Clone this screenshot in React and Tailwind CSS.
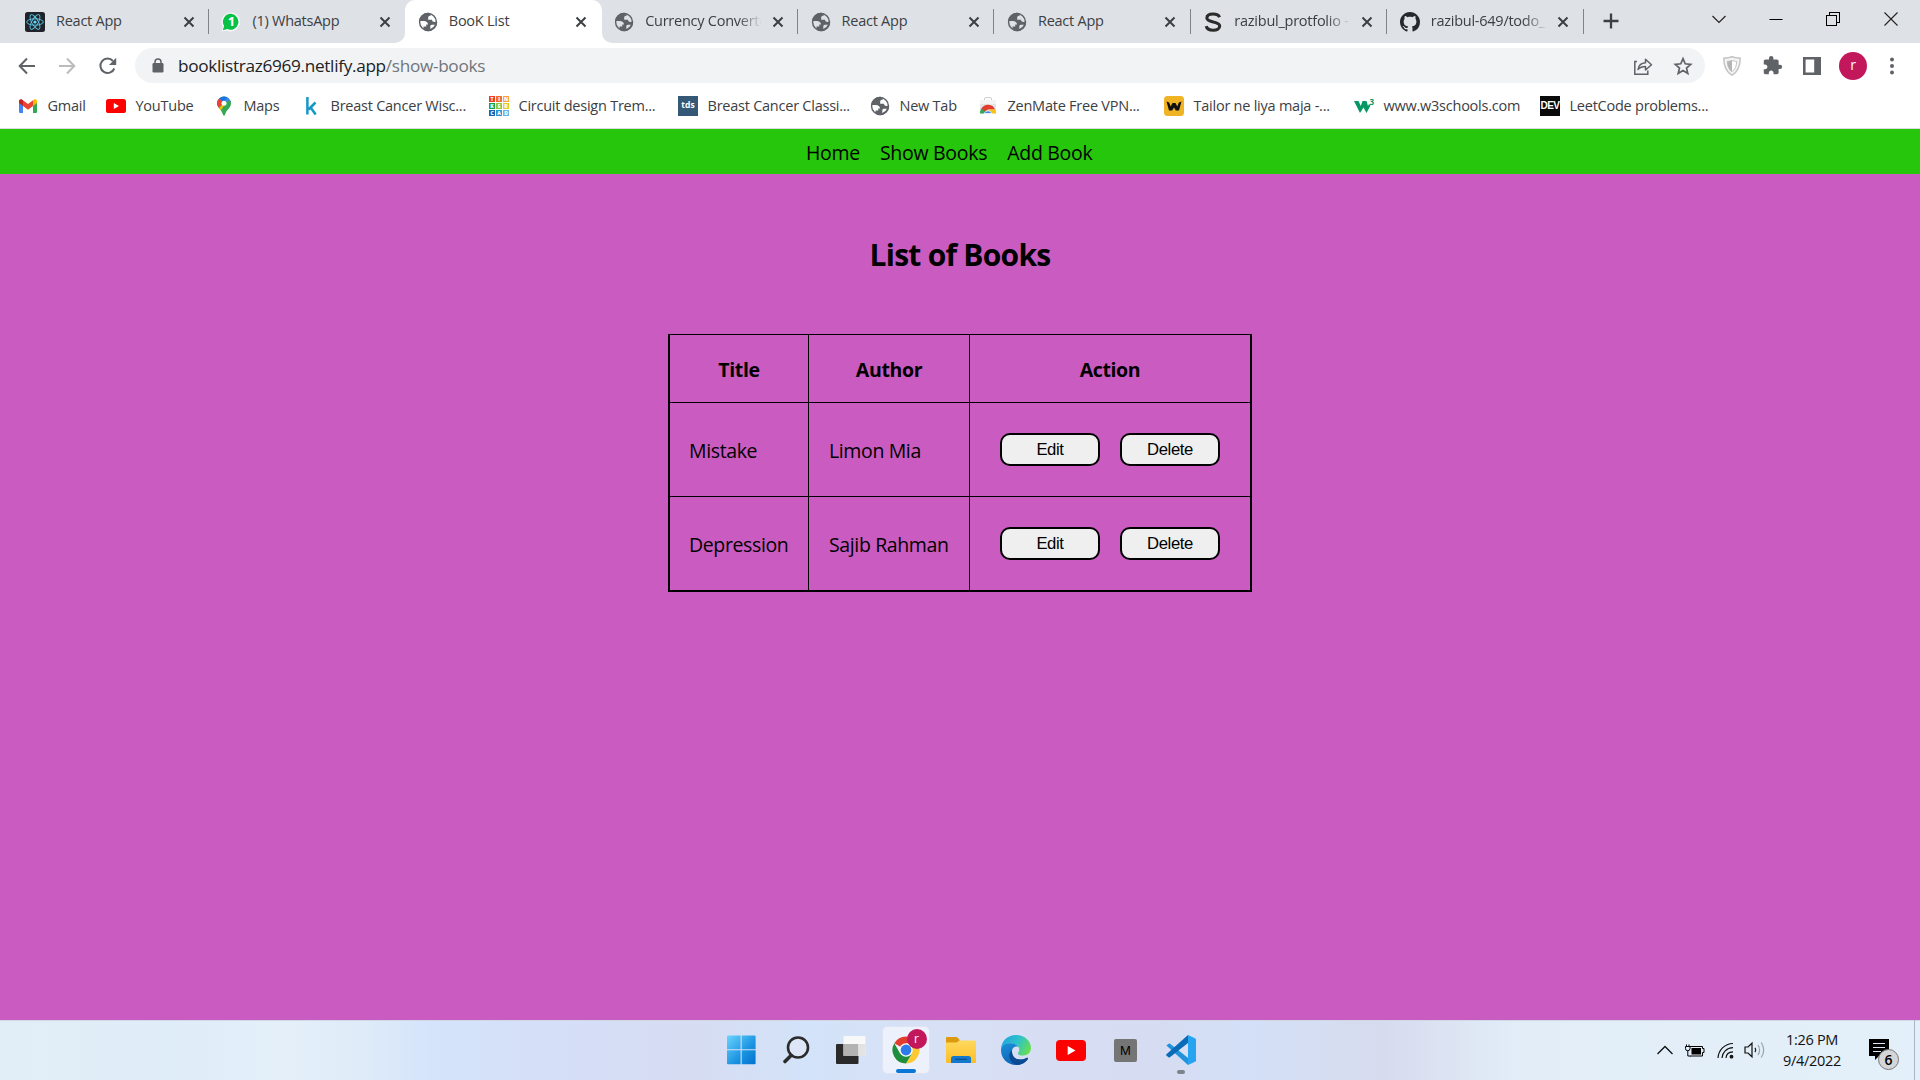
import { useId } from 'react';

function ReactLogo() {
  return (
    <svg viewBox="0 0 20 20" className="size-5">
      <rect width="20" height="20" rx="2.5" fill="#20232a" />
      <g fill="none" stroke="#5fc9e8" strokeWidth="0.9">
        <ellipse cx="10" cy="10" rx="8.3" ry="3.2" />
        <ellipse cx="10" cy="10" rx="8.3" ry="3.2" transform="rotate(60 10 10)" />
        <ellipse cx="10" cy="10" rx="8.3" ry="3.2" transform="rotate(120 10 10)" />
      </g>
      <circle cx="10" cy="10" r="1.6" fill="#61dafb" />
    </svg>
  );
}

function WhatsApp() {
  return (
    <div className="relative flex size-5 items-center justify-center">
      <svg viewBox="0 0 20 20" className="absolute size-5">
        <path d="M10 .4A9.5 9.5 0 0 0 1.8 14.8L.4 19.8l5-1.4A9.5 9.5 0 1 0 10 .4Z" fill="#f4f6f8" />
        <path d="M10.1 1.8a8 8 0 0 0-6.9 12.3l-1.4 4.2 4.4-1.2A8 8 0 1 0 10.1 1.8Z" fill="#06c143" />
      </svg>
      <span className="relative text-[13px] leading-none font-bold text-white">1</span>
    </div>
  );
}

function Globe() {
  return (
    <svg viewBox="0 0 24 24" className="size-[22px] shrink-0">
      <circle cx="12" cy="12" r="9.2" fill="none" stroke="#5f6368" strokeWidth="1.6" />
      <path
        d="M12 2a10 10 0 0 0-9.9 9h5.4c2.6.3 4.3 1.5 4.6 3.6h-2v2.4h-3v2.8A10 10 0 0 0 12 22c5.600 0 10-4.500 10-10l-.3-1.500c-1 1.300-2.200 1.700-3.700 1.200-1-.3-1.600-1-1.600-2.200h-4.200V7.200c0-1.400.9-2 2.700-2V2.500C14 2.200 13 2 12 2Zm2.500 17.600v-2.400c0-1.300.5-2.100 1.800-2.200h3.300a8.100 8.100 0 0 1-5.100 4.600Z"
        fill="#5f6368"
        fillRule="evenodd"
      />
    </svg>
  );
}

function LetterS() {
  return (
    <svg viewBox="0 0 20 20" className="size-5">
      <path d="M16.500 5.200C15.700 3 13.400 2 10 2 6.300 2 3.900 3.600 3.900 6c0 5.400 12.800 2.400 12.800 8 0 2.600-2.700 4.200-6.500 4.200-3.900 0-6.400-1.400-7-4" fill="none" stroke="#2b2b2b" strokeWidth="3.100" />
    </svg>
  );
}

function GitHub() {
  return (
    <svg viewBox="0 0 16 16" className="size-5">
      <path
        fill="#24292f"
        d="M8 0C3.58 0 0 3.58 0 8c0 3.54 2.29 6.53 5.47 7.59.4.07.55-.17.55-.38 0-.19-.01-.82-.01-1.49-2.010.37-2.530-.49-2.690-.94-.09-.23-.48-.94-.82-1.130-.28-.15-.68-.52-.01-.53.63-.01 1.080.58 1.230.82.72 1.210 1.870.87 2.330.66.07-.52.28-.87.51-1.070-1.780-.2-3.640-.89-3.640-3.950 0-.87.31-1.590.82-2.150-.08-.2-.36-1.020.08-2.120 0 0 .67-.21 2.200.82.64-.18 1.320-.27 2-.27s1.360.09 2 .27c1.530-1.040 2.200-.82 2.200-.82.44 1.100.16 1.920.08 2.120.51.56.82 1.270.82 2.150 0 3.070-1.870 3.750-3.650 3.950.29.25.54.73.54 1.480 0 1.070-.01 1.930-.01 2.200 0 .21.15.46.55.38A8.010 8.010 0 0 0 16 8c0-4.420-3.580-8-8-8Z"
      />
    </svg>
  );
}

function CloseX() {
  return (
    <svg viewBox="0 0 12 12" className="size-3 shrink-0">
      <path d="M1.500 1.500l9 9M10.500 1.500l-9 9" stroke="#3c4043" strokeWidth="2" />
    </svg>
  );
}

const tabs = [
  { icon: <ReactLogo />, title: 'React App', sep: true },
  { icon: <WhatsApp />, title: '(1) WhatsApp' },
  { icon: <Globe />, title: 'BooK List', active: true },
  { icon: <Globe />, title: 'Currency Converte', fade: true, sep: true },
  { icon: <Globe />, title: 'React App', sep: true },
  { icon: <Globe />, title: 'React App', sep: true },
  { icon: <LetterS />, title: 'razibul_protfolio -', fade: true, sep: true },
  { icon: <GitHub />, title: 'razibul-649/todo_', fade: true, sep: true },
];

function Tab({ icon, title, sep, active, fade }) {
  return (
    <div className={`relative flex h-[43px] w-[196.4px] shrink-0 items-center pl-[12.5px] ${active ? 'rounded-t-[10px] bg-white' : ''}`}>
      {active && (
        <>
          <svg viewBox="0 0 10 10" className="absolute bottom-0 left-0 size-2.5 -translate-x-full">
            <path d="M10 0v10H0A10 10 0 0 0 10 0Z" fill="#fff" />
          </svg>
          <svg viewBox="0 0 10 10" className="absolute right-0 bottom-0 size-2.5 translate-x-full">
            <path d="M0 0v10h10A10 10 0 0 1 0 0Z" fill="#fff" />
          </svg>
        </>
      )}
      <div className="flex size-5 items-center justify-center">{icon}</div>
      <div
        className={`mb-0.5 ml-[11px] w-[119px] text-[14.5px] leading-5 tracking-[-0.25px] whitespace-nowrap text-[#3c4043] ${
          fade ? '[mask-image:linear-gradient(to_right,#000_78%,transparent_98%)]' : ''
        }`}
      >
        {title}
      </div>
      <div className="ml-[7.5px] flex">
        <CloseX />
      </div>
      {sep && <div className="absolute top-[9px] right-0 h-[25px] w-px bg-[#808387]" />}
    </div>
  );
}

function TabStrip() {
  return (
    <div className="flex h-[43px] bg-[#dee1e6] pl-[12.500px] pl-[12.5px]">
      {tabs.map((t, i) => (
        <Tab key={i} {...t} />
      ))}
      <svg viewBox="0 0 16 16" className="mt-[13px] ml-[19px] size-4">
        <path d="M8 .5v15M.5 8h15" stroke="#3c4043" strokeWidth="2.300" />
      </svg>
      <div className="mr-[22px] ml-auto flex h-[37px] items-center">
        <svg viewBox="0 0 14 14" className="size-3.5">
          <path d="M.5 4l6.500 6.500L13.500 4" fill="none" stroke="#222" strokeWidth="1.200" />
        </svg>
        <svg viewBox="0 0 14 14" className="ml-[43px] size-3.5">
          <path d="M.5 7.500h13" stroke="#000" />
        </svg>
        <svg viewBox="0 0 14 14" className="ml-[43px] size-3.5" fill="none" stroke="#000" shapeRendering="crispEdges">
          <path d="M.5 3.500h10v10h-10zM3.500 3.500v-3h10v10h-3" />
        </svg>
        <svg viewBox="0 0 14 14" className="ml-[44px] size-3.5">
          <path d="M.5.5l13 13M13.500.5l-13 13" stroke="#222" strokeWidth="1.100" />
        </svg>
      </div>
    </div>
  );
}

function Toolbar() {
  return (
    <div className="flex h-[45px] items-center bg-white pr-[14px] pl-[17px]">
      <svg viewBox="0 0 20 20" className="size-5" fill="none" stroke="#5f6368" strokeWidth="2">
        <path d="M18 10H3M10 2.500L2.700 10l7.300 7.500" />
      </svg>
      <svg viewBox="0 0 20 20" className="ml-5 size-5" fill="none" stroke="#babcbe" strokeWidth="2">
        <path d="M2 10h15M10 2.500l7.300 7.500-7.300 7.500" />
      </svg>
      <svg viewBox="0 0 20 20" className="ml-[21px] size-5">
        <path d="M16.300 12.500A7.200 7.200 0 1 1 15 5" fill="none" stroke="#5f6368" strokeWidth="2" />
        <path d="M18.200 1.800v7.200h-7.200z" fill="#5f6368" />
      </svg>
      <div className="ml-[17px] flex h-[35px] w-[1570px] items-center rounded-full bg-[#f1f3f4] pr-3 pl-[17px]">
        <svg viewBox="0 0 12 15" className="h-[15px] w-3">
          <rect x=".5" y="5" width="11" height="9.500" rx="1.300" fill="#5f6368" />
          <path d="M3 5.500V4a3 3 0 0 1 6 0v1.500" fill="none" stroke="#5f6368" strokeWidth="1.500" />
        </svg>
        <div className="ml-[14px] text-[17.2px] leading-6 tracking-[-0.31px] text-[#202124]">
          booklistraz6969.netlify.app<span className="text-[#70757a]">/show-books</span>
        </div>
        <svg viewBox="0 0 20 20" className="ml-auto size-5" fill="none" stroke="#5f6368" strokeWidth="1.500">
          <path d="M4 5.500H1.800v12.700h13v-3.700" />
          <path d="M5 13.500c.6-4.200 3-6.500 7.500-6.800V3.200L18.500 8.700l-6 5.300v-3.500c-3.500 0-5.700 1-7.500 3Z" strokeLinejoin="round" />
        </svg>
        <svg viewBox="0 0 20 20" className="ml-5 size-5" fill="none" stroke="#5f6368" strokeWidth="1.700">
          <path d="M10 2.700l2.200 5.100 5.500.5-4.200 3.700 1.300 5.400L10 14.500l-4.800 2.900 1.300-5.400-4.200-3.700 5.500-.5z" />
        </svg>
      </div>
      <svg viewBox="0 0 20 20" className="ml-[17px] size-5">
        <path d="M10 .8c2.700 1 5.300 1.300 8.200 1.400 0 8.300-2.500 13.600-8.200 17C4.300 15.800 1.800 10.500 1.800 2.200 4.700 2.100 7.300 1.800 10 .8Z" fill="#f4f4f4" stroke="#c4c4c4" strokeWidth="1.500" />
        <path d="M10 4.500c1.700.6 3 .8 4.700.9-.1 4.700-1.500 8-4.700 10.300-3.200-2.300-4.600-5.600-4.700-10.300 1.700-.1 3-.3 4.700-.9Z" fill="#fff" stroke="#c4c4c4" />
        <path d="M10 4.500v11.200c-3.200-2.300-4.600-5.600-4.700-10.300 1.700-.1 3-.3 4.700-.9Z" fill="#b4b4b4" />
      </svg>
      <svg viewBox="0 0 24 24" className="ml-5 size-[21px]">
        <path fill="#5f6368" d="M20.500 11H19V7c0-1.100-.9-2-2-2h-4V3.500a2.500 2.500 0 0 0-5 0V5H4c-1.100 0-1.990.9-1.990 2v3.800H3.500c1.490 0 2.700 1.210 2.700 2.700s-1.210 2.700-2.700 2.700H2V20c0 1.100.9 2 2 2h3.800v-1.500c0-1.490 1.210-2.700 2.700-2.700s2.700 1.210 2.700 2.700V22H17c1.100 0 2-.9 2-2v-4h1.500a2.500 2.500 0 0 0 0-5z" />
      </svg>
      <svg viewBox="0 0 18 18" className="ml-5 size-[18px]">
        <path d="M0 0h18v18H0zM2.600 2.600v12.800h8.600V2.600z" fill="#5f6368" fillRule="evenodd" />
      </svg>
      <div className="ml-[18px] flex size-7 items-center justify-center rounded-full bg-[#c2185b] pb-0.5 text-[14px] leading-none text-white">r</div>
      <svg viewBox="0 0 4 18" className="ml-[23px] h-[18px] w-1" fill="#5f6368">
        <circle cx="2" cy="2.500" r="2" />
        <circle cx="2" cy="9" r="2" />
        <circle cx="2" cy="15.500" r="2" />
      </svg>
    </div>
  );
}

function Gmail() {
  return (
    <svg viewBox="0 0 18 14" className="h-3.5 w-[18px]">
      <path d="M0 2v10.700C0 13.400.6 14 1.300 14H4V5.500z" fill="#4285f4" />
      <path d="M18 2v10.700c0 .7-.6 1.300-1.300 1.300H14V5.500z" fill="#34a853" />
      <path d="M4 1.200V7l5 3.700L14 7V1.200L9 5z" fill="#ea4335" />
      <path d="M0 2v2l4 3V1.200l-.7-.5C2-.3 0 .4 0 2z" fill="#c5221f" />
      <path d="M18 2v2l-4 3V1.200l.7-.5C16-.3 18 .4 18 2z" fill="#fbbc04" />
    </svg>
  );
}

function YouTube({ className }) {
  return (
    <svg viewBox="0 0 20 14" className={className}>
      <rect width="20" height="14" rx="2.600" fill="#f00" />
      <path d="M7.800 4v6l5.200-3z" fill="#fff" />
    </svg>
  );
}

function MapsPin() {
  const id = useId();
  return (
    <svg viewBox="0 0 14 20" className="h-5 w-3.5">
      <clipPath id={id}>
        <path d="M7 .5a6.700 6.700 0 0 1 6.800 6.700c0 4.800-4.300 6-5.800 11-.4 1.700-1.600 1.700-2 0-1.500-5-5.800-6.200-5.800-11A6.700 6.700 0 0 1 7 .5Z" />
      </clipPath>
      <g clipPath={`url(#${id})`}>
        <rect width="14" height="20" fill="#34a853" />
        <path d="M0 13L14-2v-3H0z" fill="#1a73e8" />
        <path d="M7 7L11 0h5v7z" fill="#4285f4" />
        <path d="M0 0l7 7-7 6z" fill="#ea4335" />
        <path d="M0 14L7 7l4 4-7 6z" fill="#fbbc04" />
        <path d="M10 5l-6 9 2 6h9V4z" fill="#34a853" />
      </g>
      <circle cx="7" cy="7.200" r="2.500" fill="#fff" />
    </svg>
  );
}

const tinkerColors = ['bg-[#ee3e26]', 'bg-[#f36e2a]', 'bg-[#f9a13a]', 'bg-[#17a24a]', 'bg-[#8dc63f]', 'bg-[#e5cf22]', 'bg-[#1467b3]', 'bg-[#2a94d6]', 'bg-[#6bb5e2]'];

function Tinkercad() {
  return (
    <div className="grid size-5 grid-cols-3 grid-rows-3 gap-px">
      {'TINKERCAD'.split('').map((c, i) => (
        <span key={i} className={`flex min-h-0 min-w-0 items-center justify-center text-[5px] leading-none font-extrabold text-white ${tinkerColors[i]}`}>
          {c}
        </span>
      ))}
    </div>
  );
}

function ZenMate() {
  return (
    <svg viewBox="0 0 18 18" className="size-[18px]">
      <path d="M5.500 3.500v-2c0-.5.300-.8.800-.8h5.400c.5 0 .8.300.8.800v2" fill="none" stroke="#c9c9c9" />
      <path d="M1 3h16v13.500H1z" fill="#e3e4e6" />
      <path d="M1 3h16v4H1z" fill="#f3f3f4" />
      <path d="M1 16.500A8 8 0 0 1 4 10l5 6.500z" fill="#34a853" />
      <path d="M2.500 11.500a7.500 7.500 0 0 1 13.500 1H9l-3 2z" fill="#e33b2e" />
      <path d="M9.500 12.500H16.500c.5 1.300.5 2.600.5 4H9z" fill="#fbc116" />
      <path d="M5.200 16.500a4 4 0 0 1 7.600 0z" fill="#4285f4" stroke="#fff" strokeWidth=".8" />
    </svg>
  );
}

const bookmarks = [
  { icon: <Gmail />, label: 'Gmail', w: 'w-[88px]' },
  { icon: <YouTube className="h-3.5 w-5" />, label: 'YouTube', w: 'w-[108px]' },
  { icon: <MapsPin />, label: 'Maps', w: 'w-[87px]' },
  {
    icon: (
      <svg viewBox="0 0 12 18" className="h-[18px] w-3">
        <path d="M2.400 0v17.500M10.500 5.500l-7 7M5.200 10l5.500 7.500" fill="none" stroke="#1597c8" strokeWidth="2.500" />
      </svg>
    ),
    label: 'Breast Cancer Wisc...',
    w: 'w-[188px]',
  },
  { icon: <Tinkercad />, label: 'Circuit design Trem...', w: 'w-[189px]' },
  {
    icon: <div className="flex size-5 items-center justify-center bg-[#355876] pb-px text-[8.5px] leading-none font-bold text-white">tds</div>,
    label: 'Breast Cancer Classi...',
    w: 'w-[192px]',
  },
  { icon: <Globe />, label: 'New Tab', w: 'w-[108px]' },
  { icon: <ZenMate />, label: 'ZenMate Free VPN...', w: 'w-[186px]' },
  {
    icon: (
      <svg viewBox="0 0 20 20" className="size-5">
        <rect width="20" height="20" rx="3.500" fill="#f0b323" />
        <path d="M2.500 5.500l2.700 1 1.500 4L8.500 7h3l1.800 3.500 1.500-4 2.700-1-2.500 9h-3.200L10 11.500l-1.800 3H5z" fill="#111" />
      </svg>
    ),
    label: 'Tailor ne liya maja -...',
    w: 'w-[190px]',
  },
  {
    icon: (
      <div className="relative size-5">
        <svg viewBox="0 0 20 20" className="size-5">
          <path d="M0 5h4.500l2.300 5L8.500 5h4l1.500 5 1-2 1.500 1.500L12.500 17 9.500 11.500 6 17z" fill="#059862" />
        </svg>
        <span className="absolute top-[2px] right-0 text-[8px] leading-none font-bold text-[#059862]">3</span>
      </div>
    ),
    label: 'www.w3schools.com',
    w: 'w-[186px]',
  },
  {
    icon: (
      <div className='flex size-5 items-center justify-center bg-[#0a0a0a] font-["Liberation_Sans",sans-serif] text-[10px] leading-none font-bold tracking-[-0.5px] text-white'>
        DEV
      </div>
    ),
    label: 'LeetCode problems...',
    w: 'w-[180px]',
  },
];

function BookmarksBar() {
  return (
    <div className="flex h-[41px] items-center border-b border-[#dadce0] bg-white pb-1 pl-[18px]">
      {bookmarks.map((b) => (
        <div key={b.label} className={`flex shrink-0 items-center ${b.w}`}>
          <div className="flex size-5 shrink-0 items-center justify-center">{b.icon}</div>
          <span className="ml-[9.5px] text-[14.5px] leading-5 tracking-[-0.24px] whitespace-nowrap text-[#3c4043]">{b.label}</span>
        </div>
      ))}
    </div>
  );
}

const books = [
  { title: 'Mistake', author: 'Limon Mia' },
  { title: 'Depression', author: 'Sajib Rahman' },
];

function ActionButton({ children }) {
  return (
    <button className='h-[33px] w-[100px] rounded-[10px] border-2 border-black bg-[#efefef] pt-px font-["Liberation_Sans",Arial,sans-serif] text-[16.67px] leading-none text-black'>
      {children}
    </button>
  );
}

function BooksPage() {
  return (
    <main className="flex min-h-0 flex-1 flex-col items-center bg-[#ca5bc1] text-black">
      <nav className="flex h-[45px] w-full gap-5 bg-[#26c60c] pt-[11px] pl-[806px] text-[19.5px] leading-[26px] tracking-[-0.29px]">
        <a>Home</a>
        <a>Show Books</a>
        <a>Add Book</a>
      </nav>
      <h1 className="mt-[61px] text-[30px] leading-10 font-bold tracking-[-0.75px]">List of Books</h1>
      <div className="mt-[59px] grid w-[584px] grid-cols-[139px_161px_280px] grid-rows-[67px_94px_94px] border-x-2 border-t border-b-2 border-black text-[19.5px] leading-[26px] tracking-[-0.37px]">
        {['Title', 'Author', 'Action'].map((h) => (
          <div key={h} className={`flex items-center justify-center border-black pt-0.5 font-bold ${h === 'Action' ? '' : 'border-r'}`}>
            {h}
          </div>
        ))}
        {books.map((b) => (
          <div key={b.title} className="col-span-3 grid grid-cols-subgrid border-t border-black">
            <div className="flex items-center border-r border-black pt-0.5 pl-[19px]">{b.title}</div>
            <div className="flex items-center border-r border-black pt-0.5 pl-5">{b.author}</div>
            <div className="flex items-center gap-5 pl-[30px]">
              <ActionButton>Edit</ActionButton>
              <ActionButton>Delete</ActionButton>
            </div>
          </div>
        ))}
      </div>
    </main>
  );
}

function WindowsLogo() {
  return (
    <svg viewBox="0 0 30 30" className="size-[30px]">
      <defs>
        <linearGradient id="win" x1="0" y1="0" x2="1" y2="1">
          <stop offset="0" stopColor="#6bd4ff" />
          <stop offset=".6" stopColor="#1a93e0" />
          <stop offset="1" stopColor="#0072cf" />
        </linearGradient>
      </defs>
      <path d="M1 1.500q0-1 1-1h12.600v13.700H1zM15.700.5h12.900q1 0 1 1v12.700H15.700zM1 15.300h13.600v13.900H2q-1 0-1-1zM15.700 15.300h13.900v12.900q0 1-1 1H15.700z" fill="url(#win)" />
    </svg>
  );
}

function Search() {
  return (
    <svg viewBox="0 0 30 30" className="size-[30px]" fill="none" stroke="#2b2b2b">
      <circle cx="17" cy="12.500" r="10" strokeWidth="2.600" fill="#dde6f7" />
      <path d="M10 20.500L4 26.500" strokeWidth="3.600" strokeLinecap="round" />
    </svg>
  );
}

function TaskView() {
  return (
    <svg viewBox="0 0 30 30" className="size-[30px]">
      <rect x="0" y="9" width="22.500" height="20" rx="1" fill="#2a2a2a" />
      <rect x="7.500" y="1" width="22" height="20" rx="1" fill="#f8f8f8" />
      <rect x="7.500" y="9" width="15" height="12" fill="#b3b3b3" />
      <path d="M22.500 9h7v11q0 1-1 1h-6z" fill="#e3e3e3" />
    </svg>
  );
}

function ChromeIcon() {
  return (
    <svg viewBox="0 0 28 28" className="size-7">
      <path d="M14 14L2.300 7.250A13.500 13.500 0 0 1 25.700 7.250L14 14z" fill="#e33b2e" />
      <path d="M14 14l0-6.750h11.700A13.500 13.500 0 0 1 14 27.500L19.900 17.400z" fill="#fcc934" />
      <path d="M14 14l5.850 3.400L14 27.500A13.500 13.500 0 0 1 2.300 7.250L8.150 17.400z" fill="#1e8e3e" />
      <circle cx="14" cy="14" r="6.700" fill="#fff" />
      <circle cx="14" cy="14" r="5.400" fill="#2c7be8" />
    </svg>
  );
}

function Folder() {
  return (
    <svg viewBox="0 0 32 28" className="h-7 w-8">
      <defs>
        <linearGradient id="fold" x1="0" y1="0" x2="0" y2="1">
          <stop offset="0" stopColor="#ffd95e" />
          <stop offset="1" stopColor="#fcbd27" />
        </linearGradient>
      </defs>
      <path d="M1 2q0-1 1-1h9.500q.6 0 1 .5L15.500 5H30q1 0 1 1v8H1z" fill="#dd9a0e" />
      <path d="M1 6.500h10.500q.6 0 1-.4L14 4.500h16q1 0 1 1V26q0 1-1 1H2q-1 0-1-1z" fill="url(#fold)" />
      <path d="M6 27v-4.500Q6 20 8.500 20h15q2.500 0 2.500 2.500V27z" fill="#1478cc" />
      <path d="M10 23.300h12" stroke="#0b4f92" strokeWidth="1.200" />
    </svg>
  );
}

function Edge() {
  return (
    <svg viewBox="0 0 30 30" className="size-[30px]">
      <defs>
        <linearGradient id="edgeTop" x1="0" y1=".3" x2="1" y2=".7">
          <stop offset="0" stopColor="#1fa5e0" />
          <stop offset=".5" stopColor="#2fc3c7" />
          <stop offset="1" stopColor="#6be04b" />
        </linearGradient>
        <linearGradient id="edgeLeft" x1="0" y1="0" x2=".4" y2="1">
          <stop offset="0" stopColor="#1a8fd8" />
          <stop offset="1" stopColor="#0f62b5" />
        </linearGradient>
      </defs>
      <path d="M0 14C.5 5.500 7 0 15 0c8.700 0 15 6 15 13 0 4.500-3.200 7.500-7.800 7.500-4 0-5.600-1.300-5.200-2.400.3-.7 1.300-1.600 1.300-3.400C18.300 10.500 14 8.500 9.500 8.500 4.500 8.500 1 11.200 0 14Z" fill="url(#edgeTop)" />
      <path d="M0 15C0 10.800 4.500 8.300 9.300 8.300c3 0 6.400 1 8 3.600-3.300-1-6 .6-6.400 4.200C10.500 23 17 27 25.500 23c1.300-.6 1.800.2 1.200 1.200C24 28 20 30 15 30 6.500 30 0 23.500 0 15Z" fill="url(#edgeLeft)" />
      <path d="M11 15c-1.500 1.400-3.500 4-2.500 7.500C9.500 26 12 29 16 30c4.500-.2 8.300-2.300 10.800-5.800.7-1-.1-1.700-1.200-1.200-8.400 4-15 0-14.600-8Z" fill="#0c4a94" />
    </svg>
  );
}

function VSCode() {
  return (
    <svg viewBox="0 0 30 30" className="size-[30px]">
      <path d="M.4 10.600L2.600 8.800q.8-.5 1.500 0L24 24.500 22 30z" fill="#2192dc" />
      <path d="M22 0L.4 19.200q-.6.700 0 1.300l2 1.700q.8.500 1.500 0L23 7.500z" fill="#0a6cb8" />
      <path d="M22 0l7 3.200q1 .5 1 1.500v20.600q0 1-1 1.500L22 30z" fill="#26a4f2" />
      <path d="M22 8.300v13.400L13.200 15z" fill="#d9e0f4" />
    </svg>
  );
}

function Slot({ children }) {
  return <div className="relative flex h-12 w-[55px] items-center justify-center">{children}</div>;
}

function Taskbar() {
  return (
    <footer className="flex h-[60px] shrink-0 items-center bg-[linear-gradient(90deg,#e2eef7_0%,#dfedf8_9%,#e4eff9_15%,#deebf8_19%,#d4e3fb_23%,#d5dff7_29%,#d6dcf2_36%,#d3e3f9_42%,#d8e0f5_50%,#d6dcf1_60%,#d3e0f7_65%,#d7dbee_72%,#e2edf8_79%,#e3eff9_100%)] shadow-[inset_0_1px_0_#cfd8e6]">
      <div className="flex pl-[713px]">
        <Slot><WindowsLogo /></Slot>
        <Slot><Search /></Slot>
        <Slot><TaskView /></Slot>
        <Slot>
          <div className="relative flex size-12 items-center justify-center rounded-[5px] border border-[#dfe4f3] bg-[#edf1fb]">
            <ChromeIcon />
            <span className="absolute top-[2px] right-[2px] flex size-5 items-center justify-center rounded-full bg-[#c2185b] pb-px text-[12px] leading-none text-white">r</span>
            <span className="absolute bottom-0 h-1 w-5 rounded-full bg-[#0a78d4]" />
          </div>
        </Slot>
        <Slot><Folder /></Slot>
        <Slot><Edge /></Slot>
        <Slot><YouTube className="h-[21px] w-[30px]" /></Slot>
        <Slot>
          <span className='flex size-[23px] items-center justify-center rounded-[2px] bg-[#757575] font-["Liberation_Sans",sans-serif] text-[13px] leading-none text-black'>M</span>
        </Slot>
        <Slot>
          <VSCode />
          <span className="absolute bottom-0 h-1 w-2 rounded-full bg-[#7d828c]" />
        </Slot>
      </div>
      <div className="ml-auto flex h-full items-center">
        <svg viewBox="0 0 16 10" className="h-2.5 w-4">
          <path d="M.5 9L8 1.500 15.500 9" fill="none" stroke="#111" strokeWidth="1.300" />
        </svg>
        <svg viewBox="0 0 20 13" className="ml-3 h-[13px] w-5">
          <path d="M5 2.500h12.500v2h1.500v4h-1.500v3.500h-12.500" fill="none" stroke="#000" />
          <path d="M6.500 4h9.500v6.500H6.500z" fill="#000" />
          <path d="M.5 2.500h4.500v2a2.200 2.200 0 0 1-4.500 0zM1.500.5v2M4 .5v2M2.800 6.500v5.500h3" fill="#e3eff9" stroke="#000" />
        </svg>
        <svg viewBox="0 0 17 17" className="ml-3 size-[17px]" fill="none" stroke="#111" strokeWidth="1.200">
          <path d="M1 16C1.500 8 7.500 1.800 16 1.500" />
          <path d="M5 16C5.300 10.500 9.500 6 16 5.700" />
          <path d="M9 16c.2-3.500 2.800-6 7-6.200" />
          <circle cx="14.500" cy="14.700" r="1.300" fill="#111" />
        </svg>
        <svg viewBox="0 0 22 18" className="ml-2.5 h-[18px] w-[22px]" fill="none" strokeWidth="1.200">
          <path d="M1 6h3l4-3.800v13.600L4 12H1z" stroke="#111" />
          <path d="M11 6.800q1.500 2.200 0 4.400" stroke="#111" />
          <path d="M14 4q3.200 5 0 10M17.200 1.500q5 7.500 0 15" stroke="#9aa2ab" />
        </svg>
        <div className="ml-[13px] w-[66px] pb-px text-center text-[14.5px] leading-[21px] tracking-[-0.3px] whitespace-nowrap text-[#111]">
          <div>1:26 PM</div>
          <div>9/4/2022</div>
        </div>
        <div className="relative ml-6 h-[22px] w-5">
          <svg viewBox="0 0 20 22" className="h-[22px] w-5">
            <path d="M0 0h20v17H10l-4 4v-4H0z" fill="#000" />
            <path d="M4 4.500h12M4 8.500h12M4 12.500h8" stroke="#dfe8f2" strokeWidth="1.100" />
          </svg>
          <span className="absolute top-2.5 left-[9px] flex size-[21px] items-center justify-center rounded-full border border-[#777] bg-[#d3d5d8] text-[14px] leading-none font-semibold text-black">6</span>
        </div>
        <div className="mr-[5px] ml-[25px] h-full w-px bg-[#a9b6c6]" />
      </div>
    </footer>
  );
}

export default function App() {
  return (
    <div className='flex h-[1080px] w-[1920px] flex-col overflow-hidden font-["Open_Sans",sans-serif]'>
      <TabStrip />
      <Toolbar />
      <BookmarksBar />
      <BooksPage />
      <Taskbar />
    </div>
  );
}
